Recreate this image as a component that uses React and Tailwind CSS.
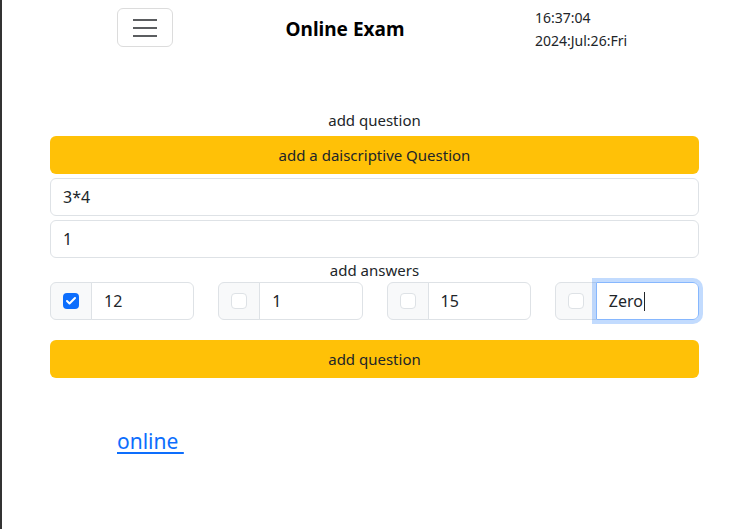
import { Check } from 'lucide-react'

const ANSWERS = [
  { value: '12', checked: true },
  { value: '1', checked: false },
  { value: '15', checked: false },
  { value: 'Zero', checked: false, focused: true },
]

function AnswerGroup({ value, checked, focused }) {
  return (
    <div className="flex h-[38px] rounded-md">
      <div className="flex w-[42px] shrink-0 items-center justify-center rounded-l-md border border-[#dee2e6] bg-[#f8f9fa]">
        {checked ? (
          <span className="flex h-4 w-4 items-center justify-center rounded-[4px] bg-[#0d6efd]">
            <Check className="h-3 w-3 text-white" strokeWidth={4} />
          </span>
        ) : (
          <span className="h-4 w-4 rounded-[4px] border border-[#dee2e6] bg-white" />
        )}
      </div>
      <div
        className={`-ml-px flex flex-1 items-center rounded-r-md border px-3 text-[16px] text-[#212529] ${
          focused ? 'relative z-10 border-[#86b7fe] shadow-[0_0_0_4px_rgba(13,110,253,0.25)]' : 'border-[#dee2e6]'
        }`}
      >
        {value}
        {focused && <span className="ml-px h-[19px] w-px bg-[#212529]" />}
      </div>
    </div>
  )
}

export default function App() {
  return (
    <div className="min-h-[529px] border-l-2 border-[#333] bg-white font-['Noto_Sans',sans-serif] text-[#212529]">
      {/* Header */}
      <div className="flex items-start pt-2">
        <button className="ml-[115px] flex h-[39px] w-[56px] flex-col items-center justify-center gap-[6px] rounded-md border border-[#dcdcdc]">
          <span className="h-[2px] w-[24px] bg-[#5b5d60]" />
          <span className="h-[2px] w-[24px] bg-[#5b5d60]" />
          <span className="h-[2px] w-[24px] bg-[#5b5d60]" />
        </button>
        <div className="flex h-[42px] w-[344px] items-center justify-center">
          <h1 className="text-[19px] font-bold text-black">Online Exam</h1>
        </div>
        <div className="ml-[18px] -mt-[2px] text-[14px] leading-[23px] text-[#212529]">
          <div>16:37:04</div>
          <div>2024:Jul:26:Fri</div>
        </div>
      </div>

      {/* Form */}
      <div className="ml-[48px] mt-[56px] w-[649px]">
        <p className="text-center text-[15px] leading-6">add question</p>
        <button className="mt-[4px] h-[38px] w-full rounded-md bg-[#ffc107] text-[15px]">
          add a daiscriptive Question
        </button>
        <div className="mt-[4px] flex h-[38px] items-center rounded-md border border-[#dee2e6] px-3 text-[16px]">3*4</div>
        <div className="mt-[4px] flex h-[38px] items-center rounded-md border border-[#dee2e6] px-3 text-[16px]">1</div>
        <p className="text-center text-[15px] leading-6">add answers</p>
        <div className="grid grid-cols-4 gap-x-6">
          {ANSWERS.map((a) => (
            <AnswerGroup key={a.value} {...a} />
          ))}
        </div>
        <button className="mt-5 h-[38px] w-full rounded-md bg-[#ffc107] text-[15px]">add question</button>
      </div>

      <div className="ml-[115px] mt-[48px]">
        <a href="#" className="text-[21px] text-[#0d6efd] underline decoration-2 underline-offset-[3px]">
          online&nbsp;
        </a>
      </div>
    </div>
  )
}
